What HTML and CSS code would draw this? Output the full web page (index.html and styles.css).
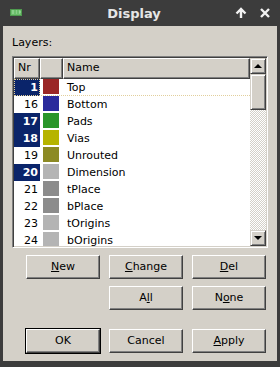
FILE: index.html
```html
<!DOCTYPE html>
<html lang="en">
<head>
	<meta charset="UTF-8">
	<title>Display</title>
	<link rel="stylesheet" href="styles.css">
</head>
<body>
	<div class="window">
		<div class="titlebar">
			<svg class="app_icon" width="12" height="7" viewBox="0 0 12 7">
				<rect x="0" y="0" width="12" height="7" fill="#4f9a4f"/>
				<rect x="1" y="1" width="10" height="5" fill="#6cc06c"/>
				<path d="M2 2h2M2 4h2M6 2h1M6 4h1M9 2h1v2h-1" stroke="#a8e0a8" stroke-width="1" fill="none"/>
			</svg>
			<div class="title">Display</div>
			<svg class="tb_btn" width="14" height="14" viewBox="0 0 14 14">
				<path d="M7 12V3M2.5 7.5L7 3l4.5 4.5" stroke="#f2f2f2" stroke-width="2.4" fill="none"/>
			</svg>
			<svg class="tb_btn" width="14" height="14" viewBox="0 0 14 14">
				<path d="M3 3l8 8M11 3l-8 8" stroke="#f2f2f2" stroke-width="2.4" fill="none"/>
			</svg>
		</div>
		<div class="client">
			<div class="label">Layers:</div>
			<div class="listbox">
				<div class="table">
					<div class="head">
						<div class="hcell c_nr">Nr</div>
						<div class="hcell c_col"></div>
						<div class="hcell c_name">Name</div>
					</div>
					<div class="row focus">
						<div class="nr sel">1</div>
						<div class="sw"><span style="background:#9a2626"></span></div>
						<div class="name">Top</div>
					</div>
					<div class="row">
						<div class="nr">16</div>
						<div class="sw"><span style="background:#2a2a9c"></span></div>
						<div class="name">Bottom</div>
					</div>
					<div class="row">
						<div class="nr sel">17</div>
						<div class="sw"><span style="background:#2a962a"></span></div>
						<div class="name">Pads</div>
					</div>
					<div class="row">
						<div class="nr sel">18</div>
						<div class="sw"><span style="background:#b6b400"></span></div>
						<div class="name">Vias</div>
					</div>
					<div class="row">
						<div class="nr">19</div>
						<div class="sw"><span style="background:#8c8a24"></span></div>
						<div class="name">Unrouted</div>
					</div>
					<div class="row">
						<div class="nr sel">20</div>
						<div class="sw"><span style="background:#b4b4b4"></span></div>
						<div class="name">Dimension</div>
					</div>
					<div class="row">
						<div class="nr">21</div>
						<div class="sw"><span style="background:#8c8c8c"></span></div>
						<div class="name">tPlace</div>
					</div>
					<div class="row">
						<div class="nr">22</div>
						<div class="sw"><span style="background:#8c8c8c"></span></div>
						<div class="name">bPlace</div>
					</div>
					<div class="row">
						<div class="nr">23</div>
						<div class="sw"><span style="background:#b4b4b4"></span></div>
						<div class="name">tOrigins</div>
					</div>
					<div class="row">
						<div class="nr">24</div>
						<div class="sw"><span style="background:#b4b4b4"></span></div>
						<div class="name">bOrigins</div>
					</div>
				</div>
				<div class="scrollbar">
					<div class="sb_btn"><i class="arr up"></i></div>
					<div class="thumb"></div>
					<div class="track"></div>
					<div class="sb_btn"><i class="arr down"></i></div>
				</div>
			</div>
			<div class="buttons">
				<div class="btn"><u>N</u>ew</div>
				<div class="btn"><u>C</u>hange</div>
				<div class="btn"><u>D</u>el</div>
			</div>
			<div class="buttons">
				<div class="btn">A<u>l</u>l</div>
				<div class="btn">N<u>o</u>ne</div>
			</div>
			<div class="buttons last">
				<div class="btn def">OK</div>
				<div class="btn">Cancel</div>
				<div class="btn"><u>A</u>pply</div>
			</div>
		</div>
	</div>
</body>
</html>
```
FILE: styles.css
```css
body {
	margin: 0;
	background: #3c3c3c;
	font-family: "DejaVu Sans", sans-serif;
	font-size: 11px;
	color: #000;
}
.window {
	width: 280px;
	height: 367px;
	display: flex;
	flex-direction: column;
	background: #3c3c3c;
}
.titlebar {
	height: 26px;
	display: flex;
	align-items: center;
	padding: 0 8px 0 10px;
	color: #e6e6e6;
}
.app_icon {
	margin-top: -2px;
}
.title {
	flex: 1;
	text-align: center;
	font-weight: bold;
	font-size: 13px;
	padding-left: 22px;
}
.tb_btn {
	margin-left: 10px;
}
.client {
	margin: 0 3px 6px 3px;
	flex: 1;
	background: #d4d0c8;
	padding: 10px 9px 0 9px;
	display: flex;
	flex-direction: column;
}
.label {
	height: 13px;
	line-height: 13px;
	margin-bottom: 7px;
}
.listbox {
	height: 188px;
	display: flex;
	border-top: 1px solid #808080;
	border-left: 1px solid #808080;
	border-right: 1px solid #fff;
	border-bottom: 1px solid #fff;
	box-shadow: inset 1px 1px 0 #404040, inset -1px -1px 0 #d4d0c8;
	padding: 1px;
	background: #fff;
}
.table {
	flex: 1;
	overflow: hidden;
}
.head {
	display: flex;
	height: 21px;
}
.hcell {
	background: #d4d0c8;
	border-top: 1px solid #fff;
	border-left: 1px solid #fff;
	border-right: 1px solid #404040;
	border-bottom: 1px solid #404040;
	box-shadow: inset -1px -1px 0 #808080;
	line-height: 18px;
	padding-left: 3px;
}
.c_nr {
	width: 21px;
}
.c_col {
	width: 18px;
}
.c_name {
	flex: 1;
}
.row {
	display: flex;
	box-sizing: border-box;
	height: 17px;
	line-height: 15px;
	border-bottom: 1px dotted transparent;
	padding-top: 1px;
}
.row.focus {
	border-bottom-color: #e2cf9c;
}
.nr {
	width: 24px;
	text-align: right;
	padding-right: 2px;
	margin-top: -1px;
	margin-bottom: -1px;
	line-height: 17px;
}
.nr.sel {
	background: #0a246a;
	color: #fff;
	font-weight: bold;
}
.row.focus .nr {
	outline: 1px dotted #e2cf9c;
	outline-offset: -1px;
}
.sw {
	width: 20px;
	padding: 0 0 0 3px;
	margin-top: -1px;
}
.sw span {
	display: block;
	width: 16px;
	height: 15px;
}
.name {
	padding-left: 4px;
}
.scrollbar {
	width: 16px;
	display: flex;
	flex-direction: column;
}
.sb_btn, .thumb {
	background: #d4d0c8;
	border-top: 1px solid #d4d0c8;
	border-left: 1px solid #d4d0c8;
	border-right: 1px solid #404040;
	border-bottom: 1px solid #404040;
	box-shadow: inset 1px 1px 0 #fff, inset -1px -1px 0 #808080;
}
.sb_btn {
	height: 14px;
	display: flex;
	align-items: center;
	justify-content: center;
}
.thumb {
	height: 34px;
}
.track {
	flex: 1;
	background: repeating-conic-gradient(#d4d0c8 0 25%, #fff 0 50%) 0 0 / 2px 2px;
}
.arr {
	width: 0;
	height: 0;
	border-left: 4px solid transparent;
	border-right: 4px solid transparent;
}
.arr.up {
	border-bottom: 4px solid #000;
}
.arr.down {
	border-top: 4px solid #000;
}
.buttons {
	display: flex;
	justify-content: flex-end;
	gap: 9px;
	padding-right: 2px;
	margin-top: 7px;
}
.buttons.last {
	margin-top: 19px;
}
.btn {
	width: 70px;
	height: 22px;
	line-height: 22px;
	text-align: center;
	background: #d4d0c8;
	border-top: 1px solid #fff;
	border-left: 1px solid #fff;
	border-right: 1px solid #404040;
	border-bottom: 1px solid #404040;
	box-shadow: inset -1px -1px 0 #808080;
	padding: 0 1px;
}
.btn.def {
	outline: 1px solid #000;
}
u {
	text-decoration: underline;
	text-underline-offset: 1px;
}
```
